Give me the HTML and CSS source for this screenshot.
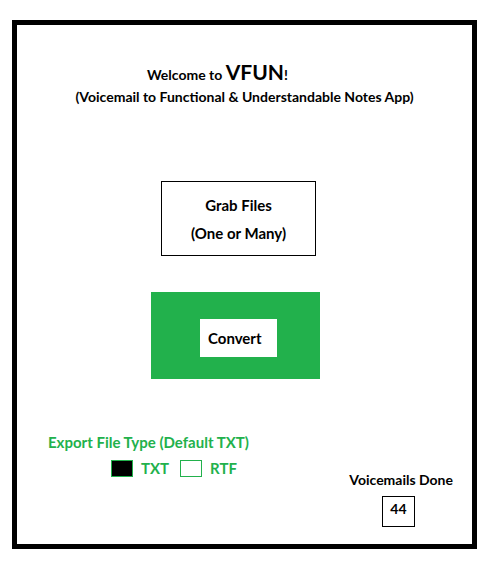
FILE: index.html
```html
<!DOCTYPE html>
<html>
<head>
<meta charset="utf-8">
<link rel="stylesheet" href="styles.css">
</head>
<body>
<div class="frame">
  <div class="welcome">Welcome to <span class="brand">VFUN</span>!</div>
  <div class="subtitle">(Voicemail to Functional &amp; Understandable Notes App)</div>
  <div class="grab">
    <div>Grab Files</div>
    <div>(One or Many)</div>
  </div>
  <div class="convert-area">
    <div class="convert">Convert</div>
  </div>
  <div class="bottom">
    <div class="export">
      <div class="export-label">Export File Type (Default TXT)</div>
      <div class="types">
        <span class="check checked"></span><span class="type-label">TXT</span>
        <span class="check"></span><span class="type-label">RTF</span>
      </div>
    </div>
    <div class="done">
      <div class="done-label">Voicemails Done</div>
      <div class="count">44</div>
    </div>
  </div>
</div>
</body>
</html>
```
FILE: styles.css
```css
html, body {
  margin: 0;
  padding: 0;
  background: #fff;
}
.frame {
  margin: 20px 0 0 12px;
  width: 465px;
  height: 529px;
  border: 5px solid #000;
  box-sizing: border-box;
  font-family: Lato, "Open Sans", sans-serif;
  font-weight: 700;
  font-size: 14px;
  color: #000;
}
.welcome {
  margin: 34px 0 0 130px;
  font-size: 14px;
  line-height: 26px;
}
.brand {
  font-size: 21px;
}
.subtitle {
  text-align: center;
  line-height: 18px;
}
.grab {
  margin: 75px 0 0 144px;
  width: 155px;
  height: 75px;
  border: 1px solid #000;
  box-sizing: border-box;
  display: flex;
  flex-direction: column;
  align-items: center;
  justify-content: center;
  font-size: 15px;
  line-height: 28px;
}
.convert-area {
  margin: 36px 0 0 134px;
  width: 169px;
  height: 87px;
  background: #22b14c;
  padding: 27px 0 0 49px;
  box-sizing: border-box;
}
.convert {
  width: 77px;
  height: 38px;
  background: #fff;
  display: flex;
  align-items: center;
  padding-left: 8px;
  box-sizing: border-box;
  font-size: 15px;
}
.bottom {
  display: flex;
  margin-top: 53px;
}
.export {
  margin-left: 31px;
  color: #22b14c;
  font-size: 15px;
}
.export-label {
  line-height: 20px;
}
.types {
  display: flex;
  align-items: center;
  margin: 7px 0 0 63px;
}
.check {
  width: 22px;
  height: 17px;
  border: 1px solid #22b14c;
  box-sizing: border-box;
  background: #fff;
}
.check.checked {
  background: #000;
}
.type-label {
  margin: 0 11px 0 8px;
}
.done {
  margin: 38px 19px 0 auto;
  display: flex;
  flex-direction: column;
  align-items: flex-start;
}
.done-label {
  line-height: 20px;
}
.count {
  margin: 6px 0 0 33px;
  width: 33px;
  height: 31px;
  border: 1px solid #000;
  box-sizing: border-box;
  padding: 3px 0 0 7px;
  line-height: 18px;
}
```
